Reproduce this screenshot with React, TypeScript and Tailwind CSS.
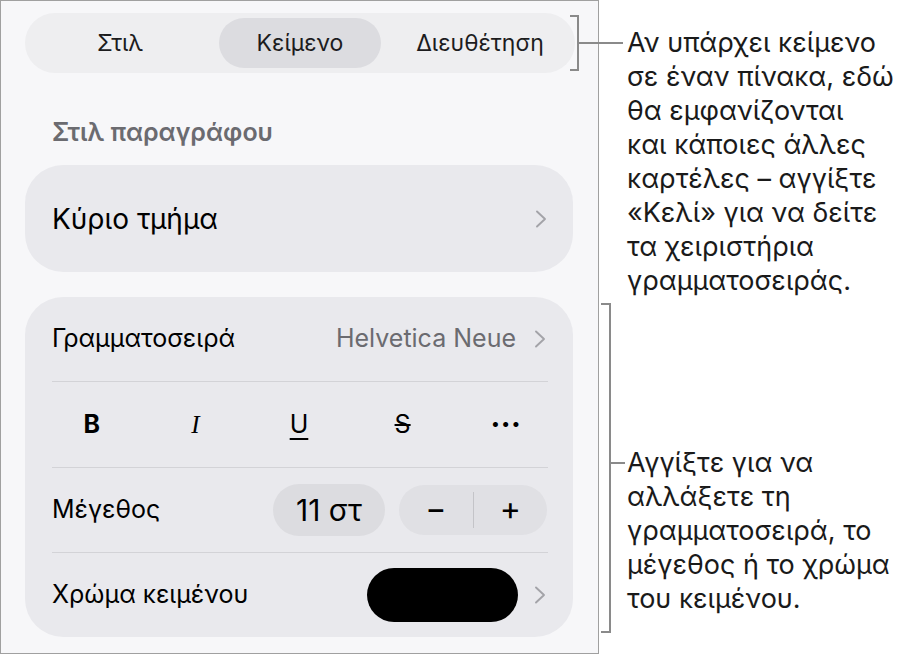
import { ReactNode } from "react";

const font = { fontFamily: "Inter, 'Noto Sans', sans-serif" };

function Chevron() {
  return (
    <svg width="12" height="18" viewBox="0 0 12 18" className="shrink-0">
      <polyline
        points="2,1.5 10,9 2,16.5"
        fill="none"
        stroke="#a3a3a8"
        strokeWidth="1.9"
        strokeLinecap="round"
        strokeLinejoin="round"
      />
    </svg>
  );
}

function Row({ children, h = "h-[84px]" }: { children: ReactNode; h?: string }) {
  return <div className={`flex items-center ${h} px-[27px]`}>{children}</div>;
}

function Divider() {
  return <div className="h-px bg-[#d3d3d7] ml-[27px] mr-[25px]" />;
}

const tabs = ["Στιλ", "Κείμενο", "Διευθέτηση"];

export default function App() {
  const active = 1;

  return (
    <div className="relative flex w-[907px] h-[657px] bg-white text-black" style={font}>
      {/* format panel */}
      <div className="w-[599px] h-[654px] border border-[#a0a0a0] bg-[#f7f7f9] shrink-0">
        <div className="ml-[24px] mt-[12px] w-[550px] h-[60px] rounded-full bg-[#eeeef0] grid grid-cols-3 p-[5px]">
          {tabs.map((t, i) => (
            <div
              key={t}
              className={`flex items-center justify-center rounded-full text-[23px] text-[#1c1c1e] ${
                i === active ? "bg-[#dcdce0] mx-[9px]" : ""
              }`}
            >
              {t}
            </div>
          ))}
        </div>

        <div className="pl-[51px] pt-[43px] pb-[17px] text-[25px] font-semibold text-[#6b6b70] leading-[32px]">
          Στιλ παραγράφου
        </div>

        <div className="ml-[24px] w-[548px] h-[107px] rounded-[38px] bg-[#e9e9ed] flex items-center justify-between pl-[27px] pr-[26px]">
          <span className="text-[28px]">Κύριο τμήμα</span>
          <Chevron />
        </div>

        <div className="ml-[24px] mt-[25px] w-[548px] rounded-[38px] bg-[#e9e9ed]">
          <Row>
            <span className="text-[25px]">Γραμματοσειρά</span>
            <span className="ml-auto mr-[18px] text-[25px] text-[#6b6b70]">Helvetica Neue</span>
            <Chevron />
          </Row>
          <Divider />
          <div className="grid grid-cols-5 h-[85px] items-center px-[15px] text-[25px]">
            <span className="text-center font-bold">B</span>
            <span className="text-center italic" style={{ fontFamily: "'Liberation Serif', serif" }}>
              I
            </span>
            <span className="text-center underline underline-offset-[5px] decoration-[2px]">U</span>
            <span className="text-center line-through decoration-[2px]">S</span>
            <span className="text-center font-black tracking-[1px]">···</span>
          </div>
          <Divider />
          <Row>
            <span className="text-[25px]">Μέγεθος</span>
            <div className="ml-auto flex items-center gap-[14px] mr-[-1px]">
              <div className="w-[112px] h-[52px] rounded-full bg-[#dcdce0] flex items-center justify-center text-[30px]">
                11 στ
              </div>
              <div className="w-[148px] h-[50px] rounded-full bg-[#e0e0e4] flex items-center">
                <span className="flex-1 text-center text-[32px] leading-none pb-[3px]">−</span>
                <div className="w-px h-[36px] bg-[#c4c4c8]" />
                <span className="flex-1 text-center text-[32px] leading-none pb-[3px]">+</span>
              </div>
            </div>
          </Row>
          <Divider />
          <Row>
            <span className="text-[25px]">Χρώμα κειμένου</span>
            <div className="ml-auto mr-[16px] w-[151px] h-[54px] rounded-full bg-black" />
            <Chevron />
          </Row>
        </div>
      </div>

      {/* callouts */}
      <div className="flex flex-col pl-[28px] text-[27px] leading-[34px] text-[#1a1a1a]">
        <p className="mt-[26px]">
          Αν υπάρχει κείμενο
          <br />
          σε έναν πίνακα, εδώ
          <br />
          θα εμφανίζονται
          <br />
          και κάποιες άλλες
          <br />
          καρτέλες – αγγίξτε
          <br />
          «Κελί» για να δείτε
          <br />
          τα χειριστήρια
          <br />
          γραμματοσειράς.
        </p>
        <p className="mt-[148px]">
          Αγγίξτε για να
          <br />
          αλλάξετε τη
          <br />
          γραμματοσειρά, το
          <br />
          μέγεθος ή το χρώμα
          <br />
          του κειμένου.
        </p>
      </div>

      {/* bracket lines */}
      <div className="absolute left-[570px] top-[15px] w-[9px] h-[56px] border-y-2 border-r-2 border-[#8a8a8a]" />
      <div className="absolute left-[579px] top-[42px] w-[44px] h-[2px] bg-[#8a8a8a]" />
      <div className="absolute left-[601px] top-[303px] w-[10px] h-[330px] border-y-2 border-r-2 border-[#8a8a8a]" />
      <div className="absolute left-[611px] top-[462px] w-[14px] h-[2px] bg-[#8a8a8a]" />
    </div>
  );
}
